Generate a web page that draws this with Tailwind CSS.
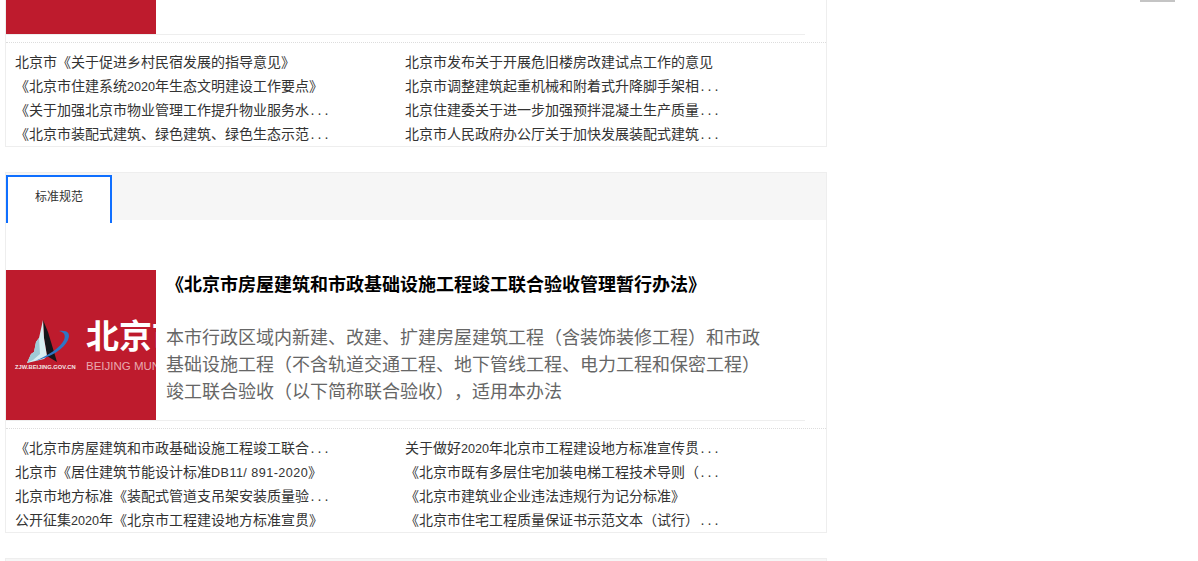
<!DOCTYPE html>
<html lang="zh-CN">
<head>
    <meta charset="UTF-8">
    <title>标准规范</title>
    <script src="https://cdn.jsdelivr.net/npm/@tailwindcss/browser@4"></script>
</head>
<body class="bg-white h-[561px] overflow-hidden font-['Noto_Sans_CJK_SC',sans-serif] text-[#333] [text-spacing-trim:space-all]">
    <div class="flex h-[561px] overflow-hidden">
        <!-- Left column -->
        <div class="w-[822px] ml-[5px] shrink-0">
            <!-- Card 1, scrolled past the top -->
            <section class="border border-t-0 border-[#eeeeee] h-[147px]">
                <div class="h-[34px] w-[150px] bg-[#be1b2d]"></div>
                <div class="h-px w-[799px] bg-[#eeeeee]"></div>
                <div class="mt-[7px] border-t border-dotted border-[#dddddd] pt-[6px] pl-[9px] grid grid-cols-[390px_410px] auto-rows-[24px] text-[14px] leading-[24px] whitespace-nowrap">
                    <a>北京市《关于促进乡村民宿发展的指导意见》</a>
                    <a>北京市发布关于开展危旧楼房改建试点工作的意见</a>
                    <a>《北京市住建系统<span class="font-['Liberation_Sans'] text-[12.6px] leading-none">2020</span>年生态文明建设工作要点》</a>
                    <a>北京市调整建筑起重机械和附着式升降脚手架相<span class="font-['Liberation_Mono'] text-[11.67px] leading-none">...</span></a>
                    <a>《关于加强北京市物业管理工作提升物业服务水<span class="font-['Liberation_Mono'] text-[11.67px] leading-none">...</span></a>
                    <a>北京住建委关于进一步加强预拌混凝土生产质量<span class="font-['Liberation_Mono'] text-[11.67px] leading-none">...</span></a>
                    <a>《北京市装配式建筑、绿色建筑、绿色生态示范<span class="font-['Liberation_Mono'] text-[11.67px] leading-none">...</span></a>
                    <a>北京市人民政府办公厅关于加快发展装配式建筑<span class="font-['Liberation_Mono'] text-[11.67px] leading-none">...</span></a>
                </div>
            </section>

            <!-- Card 2 -->
            <section class="mt-[25px] border border-[#eeeeee] h-[361px]">
                <div class="h-[47px] bg-[#f6f6f6]">
                    <div class="relative top-[2px] w-[106px] h-[48px] bg-white border-2 border-b-0 border-[#0f6fff] text-center text-[12px] leading-[38px] text-[#333]">标准规范</div>
                </div>
                <div class="pt-[50px] flex h-[200px]">
                    <div class="relative w-[150px] h-[150px] shrink-0 overflow-hidden bg-[#be1b2d]">
                        <svg class="absolute left-[14px] top-[48px]" width="60" height="52" viewBox="0 0 60 52">
                            <path d="M23 2 L28 14 L37 44 L27 38 L24 20 Z" fill="#15161a"/>
                            <path d="M23 2 L24 20 L27 38 L24 41 L7 45 L11 36 L14 34 L16 24 L19 20 Z" fill="#d8eef2"/>
                            <path d="M19 20 L20 36 L13 42 L7 45 L11 36 L14 34 L16 24 Z" fill="#9fcbd6"/>
                            <path d="M39 13 C47 12 51 15 48 22 C44 31 31 39 15 43 C29 37 40 30 44 22 C46 17 44 14 39 13 Z" fill="#2f76c4"/>
                        </svg>
                        <div class="absolute left-[9px] top-[93px] whitespace-nowrap font-['Liberation_Sans'] font-bold text-[5.8px] leading-[8px] text-[#f3e4e6]">ZJW.BEIJING.GOV.CN</div>
                        <div class="absolute left-[80px] top-[44px] whitespace-nowrap font-bold text-[33px] leading-[40px] text-white">北京市</div>
                        <div class="absolute left-[80px] top-[88px] whitespace-nowrap font-['Liberation_Sans'] text-[11.5px] leading-[16px] text-[#e9a9b0]">BEIJING MUNICIPAL</div>
                    </div>
                    <div class="pl-[10px] w-[620px]">
                        <h2 class="text-[18px] leading-[27px] font-bold text-black whitespace-nowrap">《北京市房屋建筑和市政基础设施工程竣工联合验收管理暂行办法》</h2>
                        <p class="mt-[26px] text-[18px] leading-[27px] text-[#666] whitespace-nowrap">本市行政区域内新建、改建、扩建房屋建筑工程（含装饰装修工程）和市政<br>基础设施工程（不含轨道交通工程、地下管线工程、电力工程和保密工程）<br>竣工联合验收（以下简称联合验收），适用本办法</p>
                    </div>
                </div>
                <div class="h-px w-[799px] bg-[#eeeeee]"></div>
                <div class="mt-[7px] border-t border-dotted border-[#dddddd] pt-[6px] pl-[9px] grid grid-cols-[390px_410px] auto-rows-[24px] text-[14px] leading-[24px] whitespace-nowrap">
                    <a>《北京市房屋建筑和市政基础设施工程竣工联合<span class="font-['Liberation_Mono'] text-[11.67px] leading-none">...</span></a>
                    <a>关于做好<span class="font-['Liberation_Sans'] text-[12.6px] leading-none">2020</span>年北京市工程建设地方标准宣传贯<span class="font-['Liberation_Mono'] text-[11.67px] leading-none">...</span></a>
                    <a>北京市《居住建筑节能设计标准<span class="font-['Liberation_Sans'] text-[12.6px] leading-none tracking-[0.45px]">DB11/ 891-2020</span>》</a>
                    <a>《北京市既有多层住宅加装电梯工程技术导则（<span class="font-['Liberation_Mono'] text-[11.67px] leading-none">...</span></a>
                    <a>北京市地方标准《装配式管道支吊架安装质量验<span class="font-['Liberation_Mono'] text-[11.67px] leading-none">...</span></a>
                    <a>《北京市建筑业企业违法违规行为记分标准》</a>
                    <a>公开征集<span class="font-['Liberation_Sans'] text-[12.6px] leading-none">2020</span>年《北京市工程建设地方标准宣贯》</a>
                    <a>《北京市住宅工程质量保证书示范文本（试行）<span class="font-['Liberation_Mono'] text-[11.67px] leading-none">...</span></a>
                </div>
            </section>

            <!-- Card 3, cut off by the window -->
            <section class="mt-[25px] border-x border-t border-[#eeeeee] h-[3px] bg-[#f6f6f6]"></section>
        </div>

        <!-- Right column, only a sliver shows -->
        <div class="flex-1 flex justify-end pr-[23px]">
            <div class="w-[35px] h-[2px] bg-[#c4c4c4]"></div>
        </div>
    </div>
</body>
</html>
